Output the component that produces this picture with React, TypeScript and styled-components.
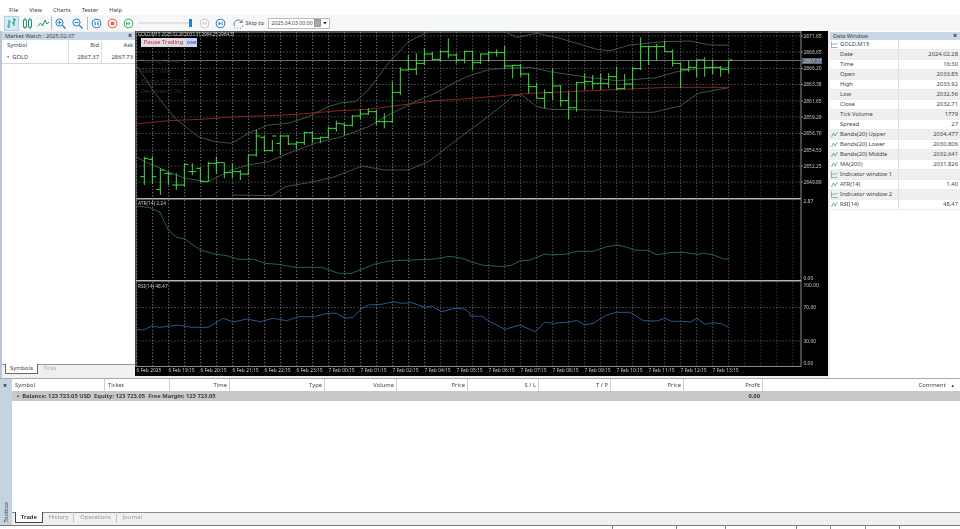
import React from 'react';
import styled, { createGlobalStyle } from 'styled-components';

type Pt = [number, number];

// chart data is traced from the picture, in page pixels
const scale = (bx: number, by: number, pts: Pt[]): Pt[] => pts.map(([x, y]) => [bx + x / 3, by + y / 3]);
const toPath = (pts: Pt[]) => pts.map(([x, y]) => `${x.toFixed(1)},${y.toFixed(1)}`).join(' ');

const upperBand = [
  ...scale(135, 30, [[3, 105], [20, 130], [60, 190], [120, 265], [190, 320], [240, 335], [290, 340], [340, 310], [400, 285], [460, 280], [520, 260], [580, 230], [620, 218], [660, 215], [700, 180], [760, 100], [820, 35], [880, 5]]),
  ...scale(450, 30, [[165, 5], [200, 22], [260, 10], [330, 25], [440, 58], [480, 62], [540, 45], [640, 35], [720, 33], [780, 45], [836, 46]]),
];
const middleBand = [
  ...scale(135, 30, [[3, 380], [30, 395], [100, 425], [150, 445], [220, 455], [290, 420], [340, 405], [400, 395], [460, 370], [540, 340], [620, 320], [700, 290], [770, 250], [830, 220], [900, 190], [945, 166]]),
  ...scale(450, 30, [[0, 165], [50, 140], [120, 118], [165, 115], [240, 112], [300, 125], [400, 140], [500, 152], [560, 148], [620, 143], [680, 125], [750, 115], [836, 113]]),
];
const lowerBand = [
  ...scale(135, 30, [[290, 495], [410, 497], [450, 470], [520, 458], [600, 440], [680, 408], [750, 420], [820, 420], [880, 395], [945, 345]]),
  ...scale(450, 30, [[0, 345], [60, 300], [120, 255], [170, 215], [190, 197], [215, 195], [260, 230], [300, 238], [440, 240], [530, 247], [610, 247], [690, 228], [745, 190], [836, 173]]),
];
const movingAverage = [
  ...scale(135, 30, [[3, 282], [100, 272], [200, 268], [300, 260], [400, 257], [500, 252], [600, 243], [700, 238], [800, 225], [900, 212], [945, 209]]),
  ...scale(450, 30, [[0, 210], [120, 200], [240, 190], [400, 183], [560, 176], [660, 172], [836, 172]]),
];
const atrLine = [
  ...scale(135, 195, [[5, 33], [45, 38], [75, 52], [100, 105], [125, 127], [150, 132], [195, 165], [240, 177], [275, 182], [310, 193], [355, 193], [390, 205], [430, 208], [480, 217], [560, 217], [610, 235], [650, 235], [720, 207], [770, 197], [830, 195], [900, 192], [945, 184], [980, 190], [1005, 198]]),
  ...scale(470, 195, [[0, 200], [40, 211], [100, 215], [125, 210], [150, 198], [180, 195], [225, 177], [245, 180], [290, 177], [320, 169], [370, 169], [410, 155], [440, 150], [465, 155], [495, 166], [535, 166], [560, 179], [600, 173], [640, 172], [680, 178], [700, 175], [730, 179], [760, 192], [778, 192]]),
];
const rsiLine = [
  ...scale(135, 195, [[5, 403], [25, 405], [50, 393], [75, 397], [130, 390], [170, 397], [220, 397], [265, 370], [295, 381], [335, 372], [375, 380], [415, 370], [455, 377], [490, 365], [535, 365], [580, 355], [605, 355], [630, 370], [655, 367], [680, 340], [700, 330], [740, 328], [775, 320], [800, 325], [830, 323], [870, 337], [890, 333], [920, 350], [960, 340], [990, 342], [1005, 355]]),
  ...scale(470, 195, [[0, 363], [35, 364], [60, 380], [105, 403], [150, 390], [195, 410], [225, 382], [250, 385], [300, 381], [320, 376], [345, 390], [370, 385], [410, 360], [440, 352], [480, 352], [520, 377], [560, 378], [585, 370], [605, 379], [645, 379], [660, 382], [680, 370], [705, 388], [730, 383], [755, 386], [775, 397]]),
];

// x, high, low, open, close
const barsLeft: number[][] = [
  [28, 380, 465, 440, 385], [52, 378, 462, 388, 440], [76, 415, 495, 478, 420], [100, 425, 465, 430, 432],
  [124, 430, 480, 465, 465], [148, 400, 470, 465, 403], [172, 400, 435, 425, 425], [196, 412, 455, 415, 455],
  [220, 395, 455, 455, 400], [244, 380, 430, 400, 398], [268, 398, 445, 398, 428], [292, 400, 445, 428, 425],
  [316, 420, 450, 425, 432], [340, 375, 435, 432, 375], [364, 300, 380, 375, 318], [388, 318, 365, 322, 362],
  [412, 330, 365, 362, 318], [436, 315, 375, 340, 318], [460, 315, 345, 318, 342], [484, 335, 358, 342, 338],
  [508, 305, 345, 338, 308], [532, 303, 340, 308, 325], [556, 320, 340, 325, 322], [580, 290, 325, 322, 295],
  [604, 272, 305, 295, 280], [628, 280, 315, 282, 286], [652, 255, 290, 286, 258], [676, 238, 268, 258, 252],
  [700, 235, 255, 252, 245], [724, 240, 285, 245, 275], [748, 250, 295, 275, 275], [772, 155, 278, 275, 187],
  [796, 112, 195, 187, 120], [820, 75, 120, 120, 118], [844, 70, 135, 118, 100], [868, 55, 105, 100, 72],
  [892, 65, 90, 72, 88], [916, 60, 95, 88, 65], [940, 25, 85, 65, 75],
];
const barsRight: number[][] = [
  [19, 70, 100, 75, 90], [44, 62, 100, 90, 64], [68, 62, 120, 64, 98], [92, 70, 102, 98, 72],
  [116, 62, 95, 72, 68], [140, 58, 80, 68, 68], [164, 48, 118, 68, 108], [188, 105, 145, 108, 106],
  [212, 102, 140, 106, 132], [236, 130, 190, 132, 170], [260, 158, 205, 170, 205], [284, 178, 235, 205, 188],
  [308, 115, 210, 188, 168], [332, 165, 230, 168, 212], [356, 185, 268, 212, 233], [380, 155, 245, 233, 158],
  [404, 130, 180, 158, 155], [428, 135, 178, 155, 160], [452, 130, 180, 160, 160], [476, 130, 175, 160, 140],
  [500, 110, 180, 140, 176], [524, 132, 178, 176, 162], [548, 110, 178, 162, 116], [572, 22, 120, 116, 50],
  [596, 48, 105, 50, 50], [620, 42, 92, 50, 50], [644, 32, 65, 50, 65], [668, 58, 110, 65, 100],
  [692, 98, 175, 100, 118], [716, 92, 125, 118, 112], [740, 88, 142, 112, 90], [764, 82, 140, 90, 112],
  [788, 88, 132, 112, 112], [812, 108, 140, 112, 118], [836, 90, 130, 118, 90],
];

const allBars = [
  ...barsLeft.map(([x, h, l, o, c]) => [135 + x / 3, 30 + h / 3, 30 + l / 3, 30 + o / 3, 30 + c / 3]),
  ...barsRight.map(([x, h, l, o, c]) => [450 + x / 3, 30 + h / 3, 30 + l / 3, 30 + o / 3, 30 + c / 3]),
];

const prices: [string, number][] = [
  ['2871.65', 36], ['2868.65', 52], ['2866.20', 68.5], ['2863.38', 84.5], ['2861.65', 101],
  ['2859.29', 117], ['2856.70', 133.5], ['2854.53', 150], ['2852.25', 166], ['2849.89', 182],
];

const timeLabels = [
  '6 Feb 2025', '6 Feb 19:15', '6 Feb 20:15', '6 Feb 21:15', '6 Feb 22:15', '6 Feb 23:15', '7 Feb 00:15',
  '7 Feb 01:15', '7 Feb 02:15', '7 Feb 04:15', '7 Feb 05:15', '7 Feb 06:15', '7 Feb 07:15', '7 Feb 08:15',
  '7 Feb 09:15', '7 Feb 10:15', '7 Feb 11:15', '7 Feb 12:15', '7 Feb 13:15',
];

const verticals = Array.from({ length: 42 }, (_, i) => 136.7 + i * 16);
const gridTone = (x: number) => (x < 440 ? '#b0b0b0' : x < 730 ? '#808080' : '#4c4c4c');

const Global = createGlobalStyle`
  html, body { margin: 0; padding: 0; background: #f0f0f0; overflow: hidden; }
  body { font-family: "Noto Sans", "Liberation Sans", sans-serif; color: #444; }
`;

// the reference is a soft, scaled-down capture
const Page = styled.div`
  width: 960px;
  height: 529px;
  display: flex;
  flex-direction: column;
  font-size: 5.8px;
  line-height: 10px;
  overflow: hidden;
  filter: blur(0.3px);
`;

const MenuBar = styled.div`
  height: 15px;
  flex: none;
  display: flex;
  align-items: center;
  gap: 11px;
  padding: 4px 0 0 9px;
  box-sizing: border-box;
  background: #fff;
`;

const ToolBar = styled.div`
  height: 16px;
  flex: none;
  display: flex;
  align-items: center;
  padding-left: 4px;
  background: #f6f7f8;
`;

const ToolButton = styled.div<{ $active?: boolean; $gap?: number }>`
  width: 15px;
  height: 15px;
  margin-right: ${p => p.$gap ?? 1}px;
  display: flex;
  align-items: center;
  justify-content: center;
  flex: none;
  box-sizing: border-box;
  background: ${p => (p.$active ? '#d6ebf7' : 'transparent')};
  border: 1px solid ${p => (p.$active ? '#a9d2ea' : 'transparent')};
`;

const ToolSep = styled.div<{ $before: number; $after: number }>`
  width: 1px;
  height: 13px;
  background: #b4b8bd;
  margin: 0 ${p => p.$after}px 0 ${p => p.$before}px;
  flex: none;
`;

const Slider = styled.div`
  width: 53px;
  height: 2px;
  margin: 0 4.5px 0 3.5px;
  background: #e2e2e2;
  position: relative;
  flex: none;
`;

const Thumb = styled.div`
  position: absolute;
  right: 0;
  top: -3px;
  width: 3px;
  height: 8px;
  background: #2a7fc9;
`;

const SkipLabel = styled.span`
  margin: 0 4px 0 0;
  width: 18px;
  white-space: nowrap;
  flex: none;
`;

const DateBox = styled.div`
  width: 62px;
  height: 11px;
  box-sizing: border-box;
  border: 1px solid #bcbcbc;
  background: #fff;
  display: flex;
  align-items: center;
  justify-content: space-between;
  padding: 0 1px 0 3px;
  line-height: 9px;
  white-space: nowrap;
  font-size: 5.2px;
`;

const Main = styled.div`
  height: 347px;
  flex: none;
  display: flex;
  background: #f0f0f0;
`;

const SidePanel = styled.aside<{ $width: number }>`
  width: ${p => p.$width}px;
  flex: none;
  display: flex;
  flex-direction: column;
  background: #fff;
  box-sizing: border-box;
`;

const MarketPanel = styled(SidePanel)`
  border-left: 2px solid #b9c6d6;
  background: #f0f0f0;
`;

const DataPanel = styled(SidePanel)`
  border-left: 2px solid #f0f0f0;
`;

const TitleBar = styled.div`
  height: 8px;
  margin-top: 1px;
  flex: none;
  display: flex;
  align-items: center;
  justify-content: space-between;
  padding: 0 3px;
  background: #c9d6e4;
  line-height: 8px;
  font-size: 5.6px;
  color: #3c3c3c;
`;

const Close = styled.span`
  font-weight: 700;
  font-size: 7px;
  color: #222;
`;

const WatchBody = styled.div`
  flex: 1;
  background: #fff;
  display: flex;
  flex-direction: column;
`;

const WatchRow = styled.div<{ $line?: boolean }>`
  height: 11px;
  display: grid;
  grid-template-columns: 66px 33px 1fr;
  border-bottom: 1px solid ${p => (p.$line ? '#d8d8d8' : 'transparent')};
`;

const WatchCell = styled.span<{ $right?: boolean }>`
  text-align: ${p => (p.$right ? 'right' : 'left')};
  padding: ${p => (p.$right ? '0 2px 0 0' : '0 0 0 4px')};
  border-left: 1px solid ${p => (p.$right ? '#dcdcdc' : 'transparent')};
  line-height: 11px;
`;

const PanelTabs = styled.div`
  height: 13px;
  flex: none;
  display: flex;
  align-items: flex-start;
  padding-left: 3px;
  border-top: 1px solid #999;
`;

const PanelTab = styled.div<{ $active?: boolean }>`
  height: 9px;
  line-height: 9px;
  padding: 0 4px;
  color: ${p => (p.$active ? '#444' : '#aaa')};
  background: ${p => (p.$active ? '#fff' : 'transparent')};
  border: solid ${p => (p.$active ? '#666' : 'transparent')};
  border-width: 0 1px 1px 1px;
  margin-top: -1px;
`;

const ChartPanel = styled.section`
  flex: 1;
  margin-bottom: 2px;
  background: #000;
  display: flex;
  flex-direction: column;
  position: relative;
  overflow: hidden;
`;

const PaneSvg = styled.svg`
  display: block;
  flex: none;
`;

const AxisText = styled.text`
  font-family: "Noto Sans", "Liberation Sans", sans-serif;
  font-size: 4.9px;
  fill: #c8c8c8;
`;

const DimText = styled.text`
  font-family: "Noto Sans", "Liberation Sans", sans-serif;
  font-size: 5.8px;
  fill: #333;
`;

const TradeButtons = styled.div`
  position: absolute;
  left: 6px;
  top: 7px;
  display: flex;
  height: 9px;
  line-height: 9px;
  font-size: 6px;
  white-space: nowrap;
`;

const PauseButton = styled.span`
  width: 45px;
  text-align: center;
  background: #dcdce4;
  color: #d8243c;
`;

const CloseButton = styled.span`
  width: 11px;
  background: #cfd3f0;
  color: #2b4fd0;
  text-align: center;
`;

const DataRow = styled.div<{ $shade?: boolean }>`
  height: 10px;
  display: grid;
  grid-template-columns: 69px 1fr;
  background: ${p => (p.$shade ? '#efefef' : '#fff')};
  border-bottom: 1px solid #ececec;
  box-sizing: border-box;
  line-height: 9px;
`;

const DataName = styled.span`
  display: flex;
  align-items: center;
  gap: 2px;
  padding-left: 1px;
  border-right: 1px solid #e0e0e0;
  white-space: nowrap;
`;

const DataIndent = styled.span`
  padding-left: 9px;
`;

const DataValue = styled.span`
  text-align: right;
  padding-right: 2px;
`;

const Toolbox = styled.div`
  flex: 1;
  display: flex;
  min-height: 0;
  border-top: 1px solid #a8a8a8;
`;

const ToolboxRail = styled.div`
  width: 12px;
  flex: none;
  background: #c4d2e2;
  position: relative;
  display: flex;
  align-items: flex-end;
  justify-content: center;
`;

const RailClose = styled.span`
  position: absolute;
  top: 2px;
  left: 3px;
  font-size: 7px;
  font-weight: 700;
  color: #222;
`;

const RailLabel = styled.span`
  writing-mode: vertical-rl;
  transform: rotate(180deg);
  font-size: 5.6px;
  line-height: 10px;
  margin-bottom: 6px;
  color: #444;
`;

const ToolboxBody = styled.div`
  flex: 1;
  display: flex;
  flex-direction: column;
  background: #fff;
  min-width: 0;
`;

const columns = '93px 65px 60px 95px 72px 71px 71px 72px 73px 79px 1fr';

const TableHead = styled.div`
  height: 12px;
  flex: none;
  display: grid;
  grid-template-columns: ${columns};
  background: #fff;
`;

const HeadCell = styled.span<{ $right?: boolean }>`
  text-align: ${p => (p.$right ? 'right' : 'left')};
  padding: 0 2px 0 3px;
  border-right: 1px solid #cfcfcf;
  line-height: 12px;
  white-space: pre;
  &:last-child { border-right: none; padding-right: 5px; }
`;

const SortMark = styled.span`
  font-size: 4.5px;
  margin-left: 5px;
`;

const BalanceRow = styled.div`
  height: 10px;
  flex: none;
  display: flex;
  background: #c8c8c8;
  line-height: 10px;
  font-weight: 700;
  color: #3a3a3a;
`;

const BalanceLeft = styled.div`
  display: flex;
  width: 751px;
`;

const BalanceText = styled.span`
  padding-left: 5px;
  white-space: pre;
`;

const ProfitText = styled.span`
  flex: 1;
  text-align: right;
  padding-right: 3px;
`;

const TableFill = styled.div`
  flex: 1;
`;

const TabStrip = styled.div`
  height: 12px;
  flex: none;
  display: flex;
  align-items: flex-start;
  background: #f0f0f0;
  border-top: 1px solid #8a8a8a;
  padding-left: 3px;
`;

const BottomTab = styled.div<{ $active?: boolean }>`
  height: 11px;
  line-height: 10px;
  padding: 0 5px;
  margin-top: -1px;
  color: ${p => (p.$active ? '#222' : '#999')};
  font-weight: ${p => (p.$active ? 600 : 400)};
  background: ${p => (p.$active ? '#fff' : 'transparent')};
  box-sizing: border-box;
  border-left: 1px solid ${p => (p.$active ? '#444' : 'transparent')};
  border-bottom: 1px solid ${p => (p.$active ? '#444' : 'transparent')};
  border-right: 1px solid ${p => (p.$active ? '#444' : '#c4c4c4')};
  &:last-child { border-right-color: transparent; }
`;

const StatusBar = styled.div`
  height: 4px;
  flex: none;
  display: flex;
  background: #fff;
  border-top: 1px solid #777;
  box-sizing: border-box;
  margin-left: -12px;
  position: relative;
  z-index: 1;
`;

const StatusCell = styled.div<{ $width: number }>`
  width: ${p => p.$width}px;
  flex: none;
  border-right: 1px solid #888;
  box-sizing: border-box;
`;

const Circle = ({ color, children }: { color: string; children: React.ReactNode }) => (
  <svg width="13" height="13" viewBox="0 0 13 13">
    <circle cx="6.5" cy="6.5" r="4.3" fill="#fff" stroke={color} strokeWidth="1.1" />
    <g fill={color}>{children}</g>
  </svg>
);

const BarsIcon = () => (
  <svg width="13" height="13" viewBox="0 0 13 13" fill="none" stroke="#1c9a6c" strokeWidth="1.1">
    <path d="M4 3v8M2 9h2M4 5h2M9 1v8M7 6h2M9 3h2" />
  </svg>
);
const CandleIcon = () => (
  <svg width="13" height="13" viewBox="0 0 13 13" fill="#fff" stroke="#1c9a6c" strokeWidth="1">
    <path d="M4 1v11M9 1v11" />
    <rect x="2.5" y="3" width="3" height="7" />
    <rect x="7.5" y="3" width="3" height="7" />
  </svg>
);
const LineIcon = () => (
  <svg width="13" height="13" viewBox="0 0 13 13" fill="none" stroke="#1c9a6c" strokeWidth="1">
    <path d="M1 9l2.500-3 2 3 2.500-6 2 4 2-2" />
  </svg>
);
const ZoomIcon = ({ plus }: { plus?: boolean }) => (
  <svg width="13" height="13" viewBox="0 0 13 13" fill="#e4f2fb" stroke="#2b86c5" strokeWidth="1">
    <circle cx="5.500" cy="5.500" r="3.600" />
    <path d="M8.500 8.500L11.500 11.500" strokeWidth="1.4" />
    <path d={plus ? 'M3.500 5.500h4M5.500 3.500v4' : 'M3.500 5.500h4'} strokeWidth="0.9" />
  </svg>
);
const SkipIcon = () => (
  <svg width="11" height="11" viewBox="0 0 11 11" fill="none" stroke="#5a6a7a" strokeWidth="0.9">
    <path d="M1.500 8a4 4 0 0 1 7-4" />
    <path d="M9.200 1.800v2.700H6.500" />
    <path d="M1 10h1M4 10h1M7 10h1M9.500 7.500v1.500" stroke="#3f8fc6" />
  </svg>
);
const CalendarIcon = () => (
  <svg width="14" height="8" viewBox="0 0 14 8">
    <rect x="0.500" y="0.500" width="6" height="7" fill="#a4a9b0" stroke="#707070" strokeWidth="0.6" />
    <path d="M9 3h4l-2 2.500z" fill="#333" />
  </svg>
);
const WaveIcon = () => (
  <svg width="7" height="7" viewBox="0 0 7 7" fill="none" stroke="#6f8fa8" strokeWidth="0.7">
    <path d="M0.500 0.500v6h6" />
    <path d="M1 4l1.500-1.500 1.500 1 2.500-1.500" />
  </svg>
);
const BandIcon = () => (
  <svg width="7" height="7" viewBox="0 0 7 7" fill="none" stroke="#2d9a6a" strokeWidth="0.7">
    <path d="M0.500 6L2.500 2 4 5 6.500 1" />
  </svg>
);

const dataRows: { name: string; value?: string; icon?: 'wave' | 'band' }[] = [
  { name: 'GOLD,M15', icon: 'wave' },
  { name: 'Date', value: '2024.02.28' },
  { name: 'Time', value: '16:30' },
  { name: 'Open', value: '2033.85' },
  { name: 'High', value: '2033.92' },
  { name: 'Low', value: '2032.56' },
  { name: 'Close', value: '2032.71' },
  { name: 'Tick Volume', value: '1779' },
  { name: 'Spread', value: '27' },
  { name: 'Bands(20) Upper', value: '2034.477', icon: 'band' },
  { name: 'Bands(20) Lower', value: '2030.806', icon: 'band' },
  { name: 'Bands(20) Middle', value: '2032.641', icon: 'band' },
  { name: 'MA(200)', value: '2031.826', icon: 'band' },
  { name: 'Indicator window 1', icon: 'wave' },
  { name: 'ATR(14)', value: '1.40', icon: 'band' },
  { name: 'Indicator window 2', icon: 'wave' },
  { name: 'RSI(14)', value: '48.47', icon: 'band' },
];

const tableHeads: [string, boolean][] = [
  ['Symbol', false], ['Ticket', false], ['Time', true], ['Type', true], ['Volume', true], ['Price', true],
  ['S / L', true], ['T / P', true], ['Price', true], ['Profit', true],
];

const statusCells = [613, 64, 49, 71, 34, 35, 34];

const Grid = ({ y0, y1, rows }: { y0: number; y1: number; rows: number[] }) => (
  <g strokeWidth="0.7" strokeDasharray="1.400 1.800">
    {verticals.map(x => <line key={x} x1={x} x2={x} y1={y0} y2={y1} stroke={gridTone(x)} />)}
    {rows.map(y => <line key={y} x1={136} x2={801} y1={y} y2={y} stroke="#707070" />)}
  </g>
);

const Frame = ({ y0, y1 }: { y0: number; y1: number }) => (
  <path d={`M136 ${y0}V${y1}M801 ${y0}V${y1}`} stroke="#8a8a8a" strokeWidth="1" fill="none" />
);

const MainPane = () => (
  <PaneSvg width="693" height="167" viewBox="135 31 693 167">
    <Grid y0={32} y1={197} rows={prices.map(p => p[1])} />
    <Frame y0={31} y1={198} />
    <line x1={136} x2={801} y1={32} y2={32} stroke="#a0a0a0" />
    <line x1={136} x2={801} y1={60.500} y2={60.500} stroke="#8c8c8c" strokeWidth="0.8" />
    <polyline points={toPath(upperBand)} fill="none" stroke="#4b6b58" strokeWidth="0.8" />
    <polyline points={toPath(middleBand)} fill="none" stroke="#4b6b58" strokeWidth="0.8" />
    <polyline points={toPath(lowerBand)} fill="none" stroke="#4b6b58" strokeWidth="0.8" />
    <polyline points={toPath(movingAverage)} fill="none" stroke="#8c2222" strokeWidth="1" />
    <g stroke="#3fe03f" strokeWidth="1" fill="none">
      {allBars.map(([x, h, l, o, c]) => (
        <path key={x} d={`M${x} ${h}V${l}M${x - 4} ${o}H${x}M${x} ${c}H${x + 4}`} />
      ))}
    </g>
    <AxisText x={138} y={36} textLength={97}>GOLD,M15 2025.02.28 2033.31 2964.25 2964.31</AxisText>
    <DimText x={141} y={63}>Trading Active</DimText>
    <DimText x={141} y={73}>Risk: 1.00%</DimText>
    <DimText x={141} y={83}>Equity: 123723.05</DimText>
    <DimText x={141} y={93}>Deviation: 1.50</DimText>
    {prices.map(([label, y]) => (
      <g key={label}>
        <line x1={801} x2={803} y1={y} y2={y} stroke="#8a8a8a" />
        <AxisText x={803.500} y={y + 1.700}>{label}</AxisText>
      </g>
    ))}
    <rect x={802} y={58} width={20} height={6} fill="#5a6a7c" />
    <AxisText x={803.500} y={62.700}>2867.37</AxisText>
  </PaneSvg>
);

const AtrPane = () => (
  <PaneSvg width="693" height="84" viewBox="135 198 693 84">
    <rect x={136} y={198} width={665} height={1.500} fill="#b4b4b4" />
    <Grid y0={200} y1={280} rows={[]} />
    <Frame y0={198} y1={282} />
    <rect x={136} y={280} width={665} height={1.500} fill="#b4b4b4" />
    <polyline points={toPath(atrLine)} fill="none" stroke="#33786a" strokeWidth="0.8" />
    <AxisText x={138} y={204.500}>ATR(14) 2.24</AxisText>
    <AxisText x={803.500} y={202.500}>2.87</AxisText>
    <AxisText x={803.500} y={279.500}>0.00</AxisText>
  </PaneSvg>
);

const RsiPane = () => (
  <PaneSvg width="693" height="94" viewBox="135 282 693 94">
    <Grid y0={282} y1={366} rows={[307.500, 341]} />
    <Frame y0={282} y1={367} />
    <line x1={136} x2={801} y1={366.500} y2={366.500} stroke="#8a8a8a" />
    <polyline points={toPath(rsiLine)} fill="none" stroke="#2f5fa8" strokeWidth="0.9" />
    <AxisText x={138} y={288}>RSI(14) 48.47</AxisText>
    {([['100.00', 287], ['70.00', 309], ['30.00', 343], ['0.00', 365]] as [string, number][]).map(([t, y]) => (
      <AxisText key={t} x={803.500} y={y}>{t}</AxisText>
    ))}
    {timeLabels.map((t, i) => (
      <AxisText key={t} x={136.500 + i * 32} y={372}>{t}</AxisText>
    ))}
  </PaneSvg>
);

const App = () => (
  <Page>
    <Global />
    <MenuBar>
      <span>File</span>
      <span>View</span>
      <span>Charts</span>
      <span>Tester</span>
      <span>Help</span>
    </MenuBar>
    <ToolBar>
      <ToolButton $active><BarsIcon /></ToolButton>
      <ToolButton><CandleIcon /></ToolButton>
      <ToolButton $gap={0}><LineIcon /></ToolButton>
      <ToolSep $before={0} $after={0.5} />
      <ToolButton $gap={2}><ZoomIcon plus /></ToolButton>
      <ToolButton $gap={2}><ZoomIcon /></ToolButton>
      <ToolSep $before={0} $after={1} />
      <ToolButton>
        <Circle color="#2b86c5"><rect x="4.500" y="4.500" width="1.200" height="4" /><rect x="7.300" y="4.500" width="1.200" height="4" /></Circle>
      </ToolButton>
      <ToolButton>
        <Circle color="#e8674a"><rect x="4.700" y="4.700" width="3.600" height="3.600" /></Circle>
      </ToolButton>
      <ToolButton $gap={0}>
        <Circle color="#3fb55f"><path d="M4 4.500l2 2-2 2zM6.500 4.500l2 2-2 2z" /></Circle>
      </ToolButton>
      <Slider><Thumb /></Slider>
      <ToolButton>
        <Circle color="#c8c8c8"><path d="M4.500 4.500l2.500 2-2.500 2zM7.500 4.500h1v4h-1z" /></Circle>
      </ToolButton>
      <ToolButton $gap={3}>
        <Circle color="#2b86c5"><path d="M4.500 4.500l2.500 2-2.500 2zM7.500 4.500h1v4h-1z" /></Circle>
      </ToolButton>
      <ToolButton $gap={0}><SkipIcon /></ToolButton>
      <SkipLabel>Skip to</SkipLabel>
      <DateBox>2025.04.03 00:00 <CalendarIcon /></DateBox>
    </ToolBar>
    <Main>
      <MarketPanel $width={135}>
        <TitleBar>Market Watch : 2025.02.07 <Close>×</Close></TitleBar>
        <WatchBody>
          <WatchRow>
            <WatchCell>Symbol</WatchCell>
            <WatchCell $right>Bid</WatchCell>
            <WatchCell $right>Ask</WatchCell>
          </WatchRow>
          <WatchRow $line>
            <WatchCell>•&nbsp; GOLD</WatchCell>
            <WatchCell $right>2867.37</WatchCell>
            <WatchCell $right>2867.73</WatchCell>
          </WatchRow>
        </WatchBody>
        <PanelTabs>
          <PanelTab $active>Symbols</PanelTab>
          <PanelTab>Ticks</PanelTab>
        </PanelTabs>
      </MarketPanel>
      <ChartPanel>
        <MainPane />
        <AtrPane />
        <RsiPane />
        <TradeButtons>
          <PauseButton>Pause Trading</PauseButton>
          <CloseButton>ose</CloseButton>
        </TradeButtons>
      </ChartPanel>
      <DataPanel $width={132}>
        <TitleBar>Data Window <Close>×</Close></TitleBar>
        {dataRows.map((r, i) => (
          <DataRow key={r.name} $shade={i % 2 === 1}>
            {r.icon ? (
              <DataName>
                {r.icon === 'wave' ? <WaveIcon /> : <BandIcon />}
                {r.name}
              </DataName>
            ) : (
              <DataName><DataIndent>{r.name}</DataIndent></DataName>
            )}
            <DataValue>{r.value}</DataValue>
          </DataRow>
        ))}
      </DataPanel>
    </Main>
    <Toolbox>
      <ToolboxRail>
        <RailClose>×</RailClose>
        <RailLabel>Toolbox</RailLabel>
      </ToolboxRail>
      <ToolboxBody>
        <TableHead>
          {tableHeads.map(([t, right], i) => (
            <HeadCell key={i} $right={right}>{t}</HeadCell>
          ))}
          <HeadCell $right>Comment<SortMark>▲</SortMark></HeadCell>
        </TableHead>
        <BalanceRow>
          <BalanceLeft>
            <BalanceText>•  Balance: 123 723.05 USD  Equity: 123 723.05  Free Margin: 123 723.05</BalanceText>
            <ProfitText>0.00</ProfitText>
          </BalanceLeft>
        </BalanceRow>
        <TableFill />
        <TabStrip>
          <BottomTab $active>Trade</BottomTab>
          <BottomTab>History</BottomTab>
          <BottomTab>Operations</BottomTab>
          <BottomTab>Journal</BottomTab>
        </TabStrip>
        <StatusBar>
          {statusCells.map((w, i) => <StatusCell key={i} $width={w} />)}
        </StatusBar>
      </ToolboxBody>
    </Toolbox>
  </Page>
);

export default App;
